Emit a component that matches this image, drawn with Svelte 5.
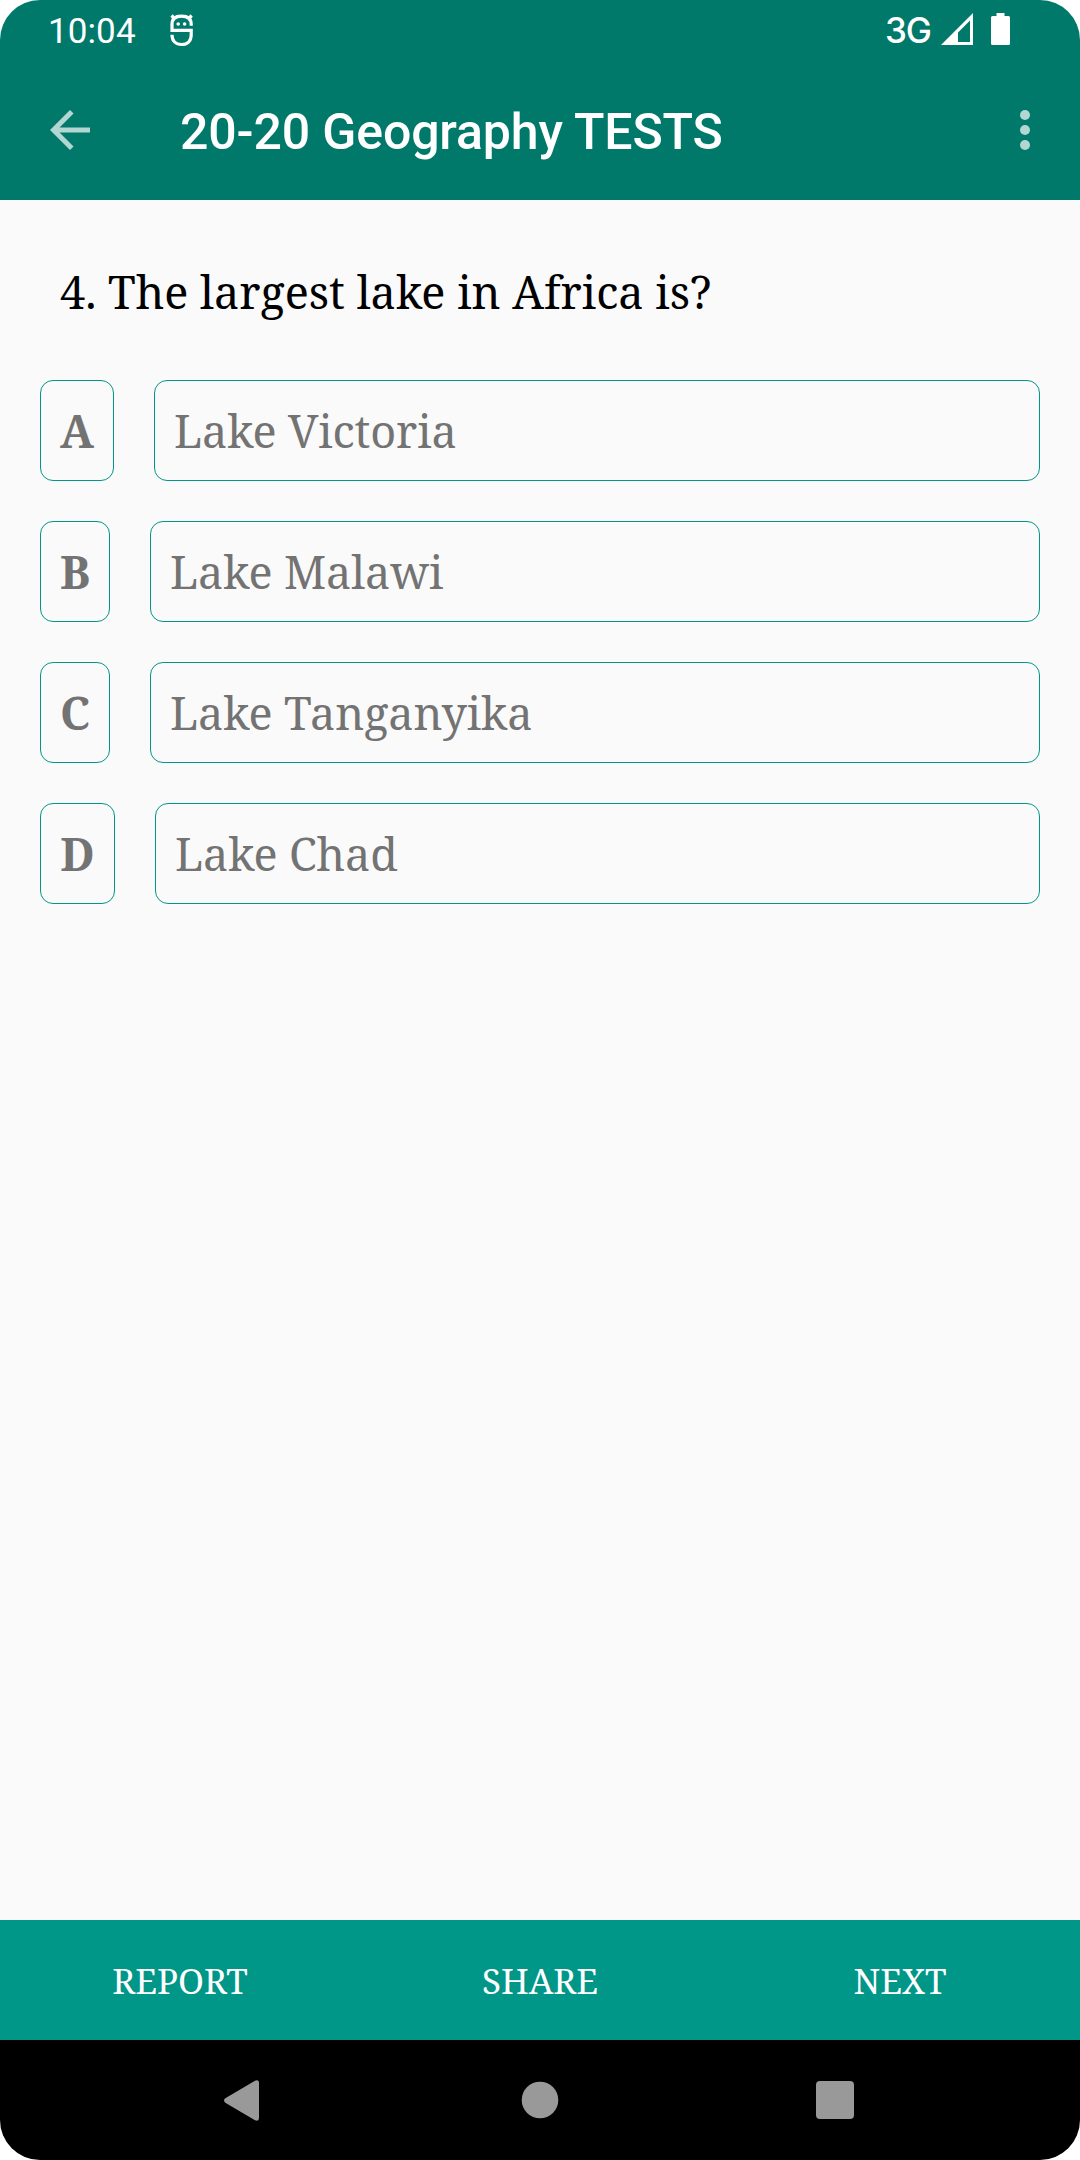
<script lang="ts">
   interface Answer {
      letter: string;
      text: string;
      letterWidth: number;
   }

   let title: string = "20-20 Geography TESTS";
   let question: string = "4. The largest lake in Africa is?";
   let answers: Answer[] = [
      { letter: "A", text: "Lake Victoria", letterWidth: 74 },
      { letter: "B", text: "Lake Malawi", letterWidth: 70 },
      { letter: "C", text: "Lake Tanganyika", letterWidth: 70 },
      { letter: "D", text: "Lake Chad", letterWidth: 75 },
   ];
   let actions: string[] = ["REPORT", "SHARE", "NEXT"];
</script>

<div class="screen">
   <header>
      <div class="status-bar">
         <span class="time">10:04</span>
         <svg class="debug-icon" width="24" height="34" viewBox="0 0 24 34">
            <g fill="none" stroke="#fff" stroke-width="3.2">
               <path d="M21.200 12.700V11.500C21.200 6 17.500 3.200 11.500 3.200S2 6 2 11.500V17.300h19.200V22c0 6-3.900 9.500-9.600 9.500S2 28 2 21.700" />
               <path d="M1.500 2.500l3.500 3.500M21.700 2.500l-3.500 3.500" />
            </g>
            <circle cx="8.200" cy="11" r="1.800" fill="#fff" />
            <circle cx="14.600" cy="11" r="1.800" fill="#fff" />
         </svg>
         <span class="network">3G</span>
         <svg class="signal-icon" width="32" height="32" viewBox="0 0 32 32">
            <path fill="#fff" fill-rule="evenodd" d="M32 0v32H0zM29 7.500L17 19.500V29h12z" />
         </svg>
         <svg width="19" height="32" viewBox="0 0 19 32">
            <path fill="#fff" d="M5.500 0h8v3H17.500q1.500 0 1.500 1.500v26q0 1.500-1.500 1.500h-16Q0 32 0 30.500v-26Q0 3 1.500 3h4z" />
         </svg>
      </div>
      <div class="toolbar">
         <svg width="40" height="40" viewBox="4 4 16 16">
            <path fill="#b2d6d1" d="M20 11H7.830l5.590-5.590L12 4l-8 8 8 8 1.410-1.410L7.830 13H20z" />
         </svg>
         <h1>{title}</h1>
         <svg width="10" height="40" viewBox="0 0 10 40">
            {#each [5, 20, 35] as cy}
               <circle cx="5" {cy} r="5" fill="#b2d6d1" />
            {/each}
         </svg>
      </div>
   </header>

   <main>
      <p class="question">{question}</p>
      <div class="answers">
         {#each answers as { letter, text, letterWidth }}
            <div class="answer">
               <span class="box letter" style="width: {letterWidth}px">{letter}</span>
               <span class="box text">{text}</span>
            </div>
         {/each}
      </div>
   </main>

   <div class="actions">
      {#each actions as action}
         <button>{action}</button>
      {/each}
   </div>

   <nav>
      <svg width="36" height="41" viewBox="0 0 36 41">
         <path fill="#999" d="M1.300 18.300L31 .700Q35 -.800 35 3v35q0 3.800-4 2.200L1.300 22.700q-2.600-2.200 0-4.400z" />
      </svg>
      <svg class="home" width="38" height="38" viewBox="0 0 38 38">
         <circle cx="19" cy="19" r="18.300" fill="#999" />
      </svg>
      <svg width="38" height="38" viewBox="0 0 38 38">
         <rect width="38" height="38" rx="4" fill="#999" />
      </svg>
   </nav>
</div>

<style>
   :global(body) {
      margin: 0;
      background: #fff;
   }

   .screen {
      display: flex;
      flex-direction: column;
      width: 1080px;
      height: 2160px;
      overflow: hidden;
      border-radius: 40px;
      background: #fafafa;
      font-family: "Noto Serif", "DejaVu Serif Condensed", "DejaVu Serif", serif;
   }

   header {
      height: 200px;
      background: #00796b;
      color: #fff;
      font-family: Roboto, sans-serif;
   }

   .status-bar {
      display: flex;
      align-items: center;
      box-sizing: border-box;
      height: 60px;
      padding: 0 70px 2px 48px;
   }

   .time {
      width: 122px;
      font-size: 35px;
      letter-spacing: 0.1px;
      line-height: 40px;
      padding-top: 5px;
   }

   .debug-icon {
      padding-top: 2px;
   }

   .network {
      margin-left: auto;
      padding-top: 2px;
      font-family: Inter, Roboto, sans-serif;
      font-size: 35px;
      font-weight: 500;
      letter-spacing: -1px;
      line-height: 40px;
   }

   .signal-icon {
      margin: 0 18px 0 10px;
   }

   .toolbar {
      display: flex;
      align-items: center;
      height: 140px;
      padding: 0 50px;
   }

   h1 {
      flex: 1;
      margin: 4px 0 0 90px;
      font-size: 50px;
      font-weight: 500;
      letter-spacing: -0.13px;
      line-height: 60px;
   }

   main {
      flex: 1;
      padding: 60px 40px 0;
   }

   .question {
      margin: 0;
      padding: 0 20px;
      height: 120px;
      color: #000;
      font-size: 45px;
      line-height: 64px;
      white-space: nowrap;
   }

   .answers {
      display: flex;
      flex-direction: column;
      gap: 40px;
   }

   .answer {
      display: flex;
      gap: 40px;
   }

   .box {
      display: flex;
      align-items: center;
      box-sizing: border-box;
      height: 101px;
      border: 1px solid #009688;
      border-radius: 13px;
      color: #737373;
      font-size: 45px;
      line-height: 64px;
   }

   .letter {
      justify-content: center;
      font-weight: bold;
   }

   .text {
      flex: 1;
      padding-left: 19px;
      letter-spacing: -0.12px;
   }

   .actions {
      display: grid;
      grid-template-columns: repeat(3, 1fr);
      height: 120px;
      background: #009688;
   }

   button {
      border: 0;
      padding: 0;
      background: none;
      color: #fff;
      font-family: inherit;
      font-size: 35px;
   }

   nav {
      display: flex;
      align-items: center;
      height: 120px;
      padding-left: 224px;
      background: #000;
   }

   .home {
      margin: 0 257px 0 261px;
   }
</style>
